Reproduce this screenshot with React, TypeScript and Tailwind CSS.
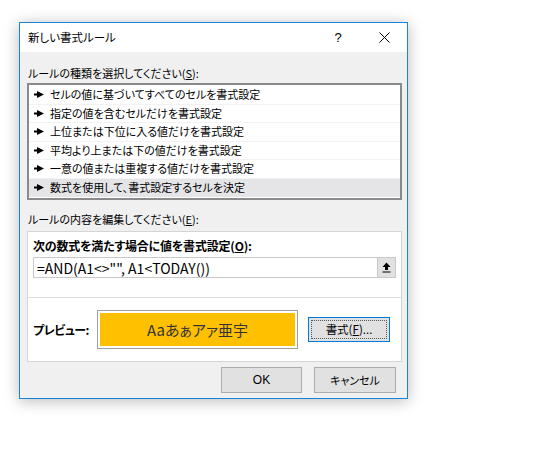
const rules = [
  "セルの値に基づいてすべてのセルを書式設定",
  "指定の値を含むセルだけを書式設定",
  "上位または下位に入る値だけを書式設定",
  "平均より上または下の値だけを書式設定",
  "一意の値または重複する値だけを書式設定",
  "数式を使用して、書式設定するセルを決定",
];

function Pointer() {
  return (
    <svg width="10" height="7" viewBox="0 0 10 7">
      <rect x="0" y="2.5" width="4" height="2" fill="#000" />
      <path d="M3 0 L10 3.5 L3 7 Z" fill="#000" />
    </svg>
  );
}

export default function App() {
  return (
    <div className="w-[560px] h-[450px] bg-white pt-[22px] pl-[19px] text-[11px] text-[#000] [font-family:'Noto_Sans_CJK_JP',sans-serif] [font-feature-settings:'palt']">
      <div className="w-[389px] h-[377px] border border-[#1883d7] bg-[#f0f0f0] flex flex-col shadow-[0_2px_14px_rgba(0,0,0,0.28)]">
        {/* TITLE BAR */}
        <div className="h-[29px] bg-white flex items-center pl-[8px] shrink-0">
          <span className="flex-1 leading-none text-[11.5px]">新しい書式ルール</span>
          <span className="w-[46px] text-center text-[13px] leading-none [font-family:'Liberation_Sans',sans-serif]">?</span>
          <span className="w-[46px] flex justify-center">
            <svg width="11" height="11" viewBox="0 0 11 11">
              <path d="M0.5 0.5 L10.5 10.5 M10.5 0.5 L0.5 10.5" stroke="#000" strokeWidth="1" />
            </svg>
          </span>
        </div>

        {/* BODY */}
        <div className="flex-1 pl-[7px] pr-[5px] flex flex-col">
          <div className="mt-[14px] pl-[1px] leading-[14px]">
            ルールの種類を選択してください(<span className="underline">S</span>):
          </div>
          <div className="mt-[3px] border-2 border-[#8a8a8a] bg-white py-[1px]">
            {rules.map((r, i) => (
              <div
                key={r}
                className={`h-[18.5px] flex items-center pl-[5px] ${
                  i < rules.length - 1 ? "border-b border-[#f2f2f2]" : ""
                } ${i === rules.length - 1 ? "bg-[#e5e5e8]" : ""}`}
              >
                <span className="w-[16px] flex items-center">
                  <Pointer />
                </span>
                <span className="leading-none">{r}</span>
              </div>
            ))}
          </div>

          <div className="mt-[12px] pl-[1px] leading-[14px]">
            ルールの内容を編集してください(<span className="underline">E</span>):
          </div>

          {/* EDIT GROUP */}
          <div className="mt-[5px] h-[131px] border border-[#d5d5d5] bg-white flex flex-col">
            <div className="h-[66px] border-b border-[#dcdcdc] px-[5px] pt-[7px]">
              <div className="font-bold text-[12px] tracking-[-0.2px] leading-[14px]">
                次の数式を満たす場合に値を書式設定(<span className="underline">O</span>):
              </div>
              <div className="mt-[4px] h-[21px] border border-[#c8c8c8] flex items-center">
                <span className="flex-1 pl-[3px] text-[14px] leading-none [font-feature-settings:'normal']">
                  =AND(A1&lt;&gt;"", A1&lt;TODAY())
                </span>
                <span className="w-[18px] h-[19px] bg-[#e1e1e1] border-l border-[#c8c8c8] flex items-center justify-center">
                  <svg width="9" height="11" viewBox="0 0 9 11">
                    <path d="M4.5 0.5 L8.5 5 L6 5 L6 8 L3 8 L3 5 L0.5 5 Z" fill="#000" />
                    <rect x="0.5" y="9.5" width="8" height="1" fill="#000" />
                  </svg>
                </span>
              </div>
            </div>
            <div className="flex-1 flex items-center px-[5px]">
              <span className="w-[64px] font-bold text-[12px] tracking-[-0.5px] leading-none">プレビュー:</span>
              <div className="w-[201px] h-[39px] border border-[#a0a0a0] p-[2px]">
                <div className="w-full h-full bg-[#ffc000] flex items-center justify-center text-[15px] text-[#333] leading-none [font-feature-settings:'normal']">
                  Aaあぁアァ亜宇
                </div>
              </div>
              <div className="ml-[10px] w-[82px] h-[25px] border border-[#0078d7] bg-[#e1e1e1] p-[2px]">
                <div className="w-full h-full border border-dotted border-[#555] flex items-center justify-center leading-none text-[11.5px]">
                  書式(<span className="underline">F</span>)...
                </div>
              </div>
            </div>
          </div>

          {/* BUTTONS */}
          <div className="mt-[5px] flex justify-end gap-[12px] pr-[6px]">
            <div className="w-[81px] h-[26px] border border-[#adadad] bg-[#e1e1e1] flex items-center justify-center leading-none text-[12px] [font-family:'Liberation_Sans',sans-serif]">
              OK
            </div>
            <div className="w-[82px] h-[26px] border border-[#adadad] bg-[#e1e1e1] flex items-center justify-center leading-none">
              キャンセル
            </div>
          </div>
        </div>
      </div>
    </div>
  );
}
